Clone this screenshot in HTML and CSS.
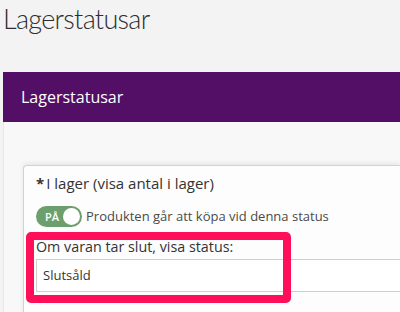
FILE: index.html
```
<!DOCTYPE html>
<html lang="sv">
<head>
    <meta charset="UTF-8" />
    <meta name="viewport" content="width=device-width, initial-scale=1" />
    <title>Lagerstatusar</title>
    <link rel="stylesheet" href="styles.css">
</head>
<body>
    <h1 class="page-title">Lagerstatusar</h1>

    <section class="panel">
        <div class="panel-head">Lagerstatusar</div>
        <div class="panel-body">
            <div class="status-card">
                <div class="status-name"><span class="req">*</span>I lager (visa antal i lager)</div>
                <div class="toggle-row">
                    <span class="toggle"><span class="toggle-text">PÅ</span><span class="knob"></span></span>
                    <span class="toggle-label">Produkten går att köpa vid denna status</span>
                </div>
                <div class="field">
                    <label class="field-label">Om varan tar slut, visa status:</label>
                    <div class="select">Slutsåld</div>
                    <div class="highlight"></div>
                </div>
            </div>
        </div>
    </section>
</body>
</html>
```

FILE: styles.css
```
html, body { height: 312px; overflow: hidden; }
body { margin: 0; padding-left: 3px; background: #f3f3f3; font-family: "Open Sans", Arial, sans-serif; color: #333; }
.page-title { margin: 3px 0 37px; font-family: Lato, "Open Sans", sans-serif; font-weight: 300; font-size: 27px; line-height: 32px; letter-spacing: -0.7px; color: #2e2e2e; }

.panel-head { height: 50px; line-height: 50px; padding-left: 18px; background: #530e66; color: #fff; font-size: 16px; }
.panel-body { background: #f8f8f8; border-left: 1px solid #e6e6e6; padding: 43px 0 0 19px; height: 147px; }

.status-card { height: 146px; background: #fdfdfd; border: 1px solid #d2d2d2; border-right: 0; border-bottom: 0; border-radius: 4px 0 0 0; padding: 7px 0 0 12px; box-shadow: 0 -2px 5px rgba(0, 0, 0, 0.07); }
.status-name { font-size: 15px; line-height: 20px; color: #333; }
.req { font-weight: 700; margin-right: 2px; }

.toggle-row { display: flex; align-items: center; gap: 4px; margin-top: 13px; font-size: 13px; line-height: 21px; color: #4a4a4a; }
.toggle { display: flex; align-items: center; justify-content: space-between; width: 46px; height: 21px; border-radius: 11px; background: #6c9e6e; padding: 0 2px 0 9px; box-sizing: border-box; }
.toggle-text { color: #fff; font-size: 11px; font-weight: 600; line-height: 21px; }
.knob { width: 17px; height: 17px; border-radius: 50%; background: #fff; }

.field { position: relative; margin-top: 10px; }
.field-label { display: block; font-size: 14.3px; line-height: 19px; color: #333; }
.select { margin-top: 3px; height: 33px; box-sizing: border-box; border: 1px solid #cfcfcf; border-right: 0; background: #fff; padding-left: 6px; font-size: 13px; line-height: 31px; color: #333; }
.highlight { position: absolute; left: -10px; top: -5px; width: 265px; height: 71px; box-sizing: border-box; border: 8px solid #ff0f5a; border-radius: 5px; }
```
